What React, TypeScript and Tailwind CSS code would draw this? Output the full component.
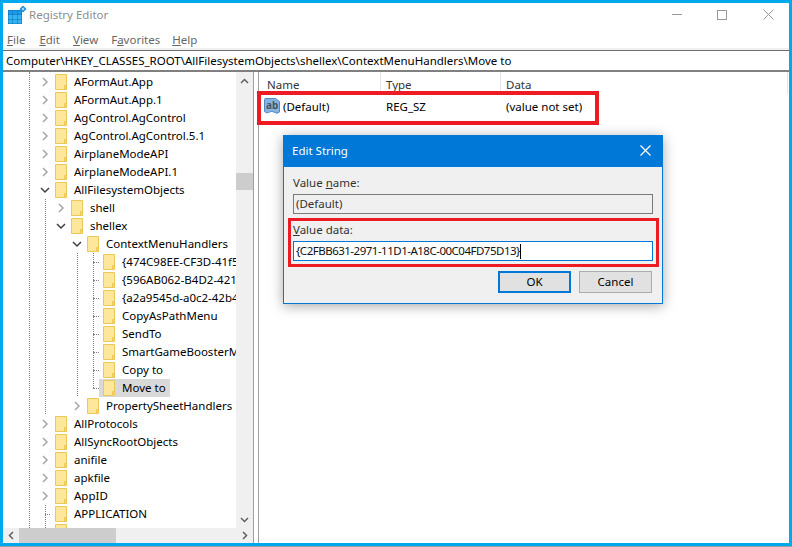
const font = "font-['Noto_Sans',sans-serif]";

type Row = { t: string; l: number; c?: "open" | "closed" | "none"; sel?: boolean; dim?: boolean };

const rows: Row[] = [
  { t: "AFormAut.App", l: 0, c: "closed" },
  { t: "AFormAut.App.1", l: 0, c: "closed" },
  { t: "AgControl.AgControl", l: 0, c: "closed" },
  { t: "AgControl.AgControl.5.1", l: 0, c: "closed" },
  { t: "AirplaneModeAPI", l: 0, c: "closed" },
  { t: "AirplaneModeAPI.1", l: 0, c: "closed" },
  { t: "AllFilesystemObjects", l: 0, c: "open" },
  { t: "shell", l: 1, c: "closed" },
  { t: "shellex", l: 1, c: "open" },
  { t: "ContextMenuHandlers", l: 2, c: "open" },
  { t: "{474C98EE-CF3D-41f5-80E3-4AAB0AB0DC41}", l: 3 },
  { t: "{596AB062-B4D2-4215-9F74-E9109B0A8153}", l: 3 },
  { t: "{a2a9545d-a0c2-42b4-9708-A0B2BADD77C8}", l: 3 },
  { t: "CopyAsPathMenu", l: 3 },
  { t: "SendTo", l: 3 },
  { t: "SmartGameBoosterMenu", l: 3 },
  { t: "Copy to", l: 3 },
  { t: "Move to", l: 3, sel: true },
  { t: "PropertySheetHandlers", l: 2, c: "closed" },
  { t: "AllProtocols", l: 0, c: "closed" },
  { t: "AllSyncRootObjects", l: 0, c: "closed" },
  { t: "anifile", l: 0, c: "closed" },
  { t: "apkfile", l: 0, c: "closed" },
  { t: "AppID", l: 0, c: "closed" },
  { t: "APPLICATION", l: 0 },
];

const levelPad = ["pl-[34px]", "pl-[50px]", "pl-[66px]", "pl-[82px]"];

function Folder() {
  return (
    <svg width="13" height="16" viewBox="0 0 13 16" className="shrink-0">
      <path d="M0.5 0.5H11.5V15.5H0.5Z" fill="#fde79a" stroke="#ecc85a" />
      <path d="M9.5 15.5V11.5H11.5V15.5Z" fill="#f6d672" stroke="#ecc85a" />
    </svg>
  );
}

function Chevron({ c }: { c?: Row["c"] }) {
  return (
    <div className="w-4 h-full flex items-center justify-center shrink-0 relative bg-white">
      {c === "closed" && (
        <svg width="8" height="10" viewBox="0 0 8 10">
          <polyline points="2,1 6,5 2,9" fill="none" stroke="#a6a6a6" strokeWidth="1.5" />
        </svg>
      )}
      {c === "open" && (
        <svg width="10" height="8" viewBox="0 0 10 8">
          <polyline points="1,2 5,6 9,2" fill="none" stroke="#404040" strokeWidth="1.5" />
        </svg>
      )}
    </div>
  );
}

function TreeRow({ r }: { r: Row }) {
  const leaf = !r.c;
  return (
    <div className={`h-[18px] flex items-center whitespace-nowrap relative ${levelPad[r.l]}`}>
      {leaf ? <div className="w-4 h-full shrink-0" /> : <Chevron c={r.c} />}
      <div className={`h-[18px] flex items-center -ml-[2px] pl-[4px] pr-[4px] gap-[6px] relative ${r.sel ? "bg-[#d9d9d9]" : "bg-white"}`}>
        <Folder />
        <span className="text-[11.5px] leading-[18px] text-black">{r.t}</span>
      </div>
    </div>
  );
}

function Guides() {
  const stubs = [
    { y: 262 }, { y: 280 }, { y: 298 }, { y: 316 }, { y: 334 }, { y: 352 }, { y: 370 }, { y: 388 },
  ];
  return (
    <>
      <div className="absolute left-[26px] top-0 h-[456px] border-l border-dotted border-[#808080]" />
      <div className="absolute left-[42px] top-[127px] h-[217px] border-l border-dotted border-[#808080]" />
      <div className="absolute left-[42px] top-[433px] h-[23px] border-l border-dotted border-[#808080]" />
      <div className="absolute left-[42px] top-[442px] w-[7px] border-t border-dotted border-[#808080]" />
      <div className="absolute left-[74px] top-[181px] h-[145px] border-l border-dotted border-[#808080]" />
      <div className="absolute left-[90px] top-[181px] h-[135px] border-l border-dotted border-[#808080]" />
      {stubs.map((s) => (
        <div key={s.y} className="absolute left-[90px] w-[6px] border-t border-dotted border-[#808080]" style={{ top: s.y - 72 }} />
      ))}
    </>
  );
}

function AppIcon() {
  return (
    <svg width="20" height="20" viewBox="0 0 20 20">
      <rect x="1" y="5" width="14" height="14" fill="#0a6fc2" />
      {[0, 1, 2].map((i) =>
        [0, 1, 2].map((j) => (
          <rect key={`${i}${j}`} x={1.5 + i * 4.5} y={5.5 + j * 4.5} width="4" height="4" fill={j === 0 ? "#1e9be6" : "#35b4f0"} />
        ))
      )}
      <path d="M16 0.5L19.5 4L16 7.5L12.5 4Z" fill="#1a8fe0" />
      <path d="M16 2.5L17.5 4L16 5.5L14.5 4Z" fill="#bfe6fb" />
    </svg>
  );
}

function ValueIcon() {
  return (
    <svg width="17" height="17" viewBox="0 0 17 17" className="shrink-0">
      <path d="M0.5 1.5Q0.5 0.5 1.5 0.5H11.5L15.5 3.5V14Q13 16.5 10 14Q7 12.5 4.5 14.5Q2 15.5 0.5 13.5Z" fill="#86b3e0" stroke="#4f8bc9" />
      <text x="2" y="11" fontSize="10" fontWeight="700" fill="#4a5560" fontFamily="Noto Sans, sans-serif">ab</text>
    </svg>
  );
}

function Menu({ pre, u, post, cls }: { pre?: string; u: string; post: string; cls: string }) {
  return (
    <span className={`text-[11.5px] text-[#666] ${cls}`}>
      {pre}
      <span className="underline">{u}</span>
      {post}
    </span>
  );
}

export default function App() {
  return (
    <div className={`${font} w-[792px] h-[547px] bg-[#a0a0a0] relative overflow-hidden`}>
      <div className="w-[792px] h-[546px] border-[3px] border-[#00a8ee] bg-white flex flex-col">
        {/* Title bar */}
        <div className="h-[23px] flex items-center shrink-0 pl-[4px]">
          <AppIcon />
          <span className="ml-[2px] pt-px text-[11.5px] text-[#8d8d8d]">Registry Editor</span>
          <div className="ml-auto flex items-center">
            <div className="w-[42px] flex justify-center">
              <div className="w-[10px] h-px bg-[#999]" />
            </div>
            <div className="w-[42px] ml-[3px] flex justify-center">
              <div className="w-[10px] h-[10px] border border-[#999]" />
            </div>
            <div className="w-[42px] ml-[4px] flex justify-center">
              <svg width="11" height="11" viewBox="0 0 11 11">
                <path d="M0.5 0.5L10.5 10.5M10.5 0.5L0.5 10.5" stroke="#999" fill="none" />
              </svg>
            </div>
          </div>
        </div>
        {/* Menu bar */}
        <div className="h-[22px] flex items-center shrink-0 pt-[6px]">
          <Menu u="F" post="ile" cls="ml-[4px]" />
          <Menu u="E" post="dit" cls="ml-[14px]" />
          <Menu u="V" post="iew" cls="ml-[13px]" />
          <Menu pre="F" u="a" post="vorites" cls="ml-[13px]" />
          <Menu u="H" post="elp" cls="ml-[12px]" />
        </div>
        <div className="h-[2px] bg-[#f0f0f0] shrink-0" />
        <div className="h-px bg-[#6d6d6d] shrink-0" />
        {/* Address */}
        <div className="h-[19px] flex items-center shrink-0 pl-[3px] text-[11.5px] text-black whitespace-nowrap">
          Computer\HKEY_CLASSES_ROOT\AllFilesystemObjects\shellex\ContextMenuHandlers\Move to
        </div>
        <div className="h-[2px] bg-[#808080] shrink-0" />
        {/* Panes */}
        <div className="flex-1 min-h-0 flex">
          <div className="w-[250px] flex flex-col shrink-0">
            <div className="flex-1 min-h-0 flex">
              <div className="w-[233px] overflow-hidden relative pt-px">
                <Guides />
                {rows.map((r) => (
                  <TreeRow key={r.t} r={r} />
                ))}
                <div className="h-[18px] pl-[52px] pt-px">
                  <Folder />
                </div>
              </div>
              <div className="w-[17px] bg-[#f0f0f0] flex flex-col items-center">
                <div className="h-[17px] flex items-center justify-center">
                  <svg width="9" height="6" viewBox="0 0 9 6"><polyline points="1,5 4.5,1.5 8,5" fill="none" stroke="#606060" strokeWidth="1.5" /></svg>
                </div>
                <div className="h-[84px]" />
                <div className="w-full h-[17px] bg-[#cdcdcd]" />
                <div className="flex-1" />
                <div className="h-[17px] flex items-center justify-center">
                  <svg width="9" height="6" viewBox="0 0 9 6"><polyline points="1,1 4.5,4.5 8,1" fill="none" stroke="#606060" strokeWidth="1.5" /></svg>
                </div>
              </div>
            </div>
            <div className="h-[15px] bg-[#f0f0f0] flex items-center shrink-0">
              <div className="w-[16px] flex justify-center">
                <svg width="6" height="9" viewBox="0 0 6 9"><polyline points="5,1 1.5,4.5 5,8" fill="none" stroke="#606060" strokeWidth="1.5" /></svg>
              </div>
              <div className="w-[97px] h-full bg-[#cdcdcd]" />
              <div className="flex-1" />
              <div className="w-[17px] flex justify-center">
                <svg width="6" height="9" viewBox="0 0 6 9"><polyline points="1,1 4.5,4.5 1,8" fill="none" stroke="#606060" strokeWidth="1.5" /></svg>
              </div>
            </div>
          </div>
          <div className="w-[5px] shrink-0 border-l border-[#a0a0a0]" />
          <div className="flex-1 border-l border-[#a0a0a0] min-w-0">
            <div className="h-[22px] flex text-[11.5px] text-[#333]">
              <div className="w-[122px] pl-[8px] pt-[4px] h-full flex items-center border-r border-[#e5e5e5]">Name</div>
              <div className="w-[120px] pl-[5px] pt-[4px] h-full flex items-center border-r border-[#e5e5e5]">Type</div>
              <div className="w-[287px] pl-[5px] pt-[4px] h-full flex items-center border-r border-[#e5e5e5]">Data</div>
            </div>
            <div className="h-[24px] flex items-center text-[11.5px] text-black">
              <div className="w-[122px] pl-[5px] flex items-center gap-[2px]">
                <ValueIcon />
                <span className="pt-px">(Default)</span>
              </div>
              <div className="w-[120px] pl-[5px] pt-px">REG_SZ</div>
              <div className="pl-[5px] pt-px">(value not set)</div>
            </div>
          </div>
        </div>
      </div>

      {/* Red highlight on the value row */}
      <div className="absolute left-[257px] top-[91px] w-[342px] h-[34px] border-[4px] border-[#ed1c24]" />

      {/* Edit String dialog */}
      <div className="absolute left-[283px] top-[135px] w-[380px] h-[169px] bg-[#f0f0f0] border border-[#0078d7] shadow-[0_2px_12px_rgba(0,0,0,0.35)] flex flex-col">
        <div className="h-[31px] bg-[#0078d7] flex items-center pl-[8px] pr-[10px] pb-[2px] shrink-0">
          <span className="text-[11.5px] text-white">Edit String</span>
          <svg width="11" height="11" viewBox="0 0 11 11" className="ml-auto mr-[1px]">
            <path d="M0.5 0.5L10.5 10.5M10.5 0.5L0.5 10.5" stroke="#fff" strokeWidth="1.2" fill="none" />
          </svg>
        </div>
        <div className="flex-1 flex flex-col pl-[9px] pr-[9px] pt-[7px] text-[11.5px] text-black">
          <div className="h-[18px] leading-[18px] text-[#333]">
            Value <span className="underline">n</span>ame:
          </div>
          <div className="h-[20px] mt-[2px] border border-[#7a7a7a] bg-[#f0f0f0] flex items-center pl-[2px] text-[#333]">(Default)</div>
          <div className="h-[18px] leading-[18px] mt-[7px] text-[#333]">
            <span className="underline">V</span>alue data:
          </div>
          <div className="h-[20px] mt-[2px] border border-[#0078d7] bg-white flex items-center pl-[2px] text-[#111] whitespace-nowrap">
            <span className="tracking-[-0.5px]">{"{C2FBB631-2971-11D1-A18C-00C04FD75D13}"}</span>
            <span className="w-px h-[15px] bg-black" />
          </div>
          <div className="flex justify-end mt-[10px] gap-[8px] mr-px">
            <div className="w-[73px] h-[22px] border-2 border-[#0078d7] bg-[#e1e1e1] flex items-center justify-center">OK</div>
            <div className="w-[73px] h-[22px] border border-[#adadad] bg-[#e1e1e1] flex items-center justify-center">Cancel</div>
          </div>
        </div>
      </div>

      {/* Red highlight on the value data */}
      <div className="absolute left-[288px] top-[218px] w-[371px] h-[49px] border-[3px] border-[#ed1c24]" />
    </div>
  );
}
